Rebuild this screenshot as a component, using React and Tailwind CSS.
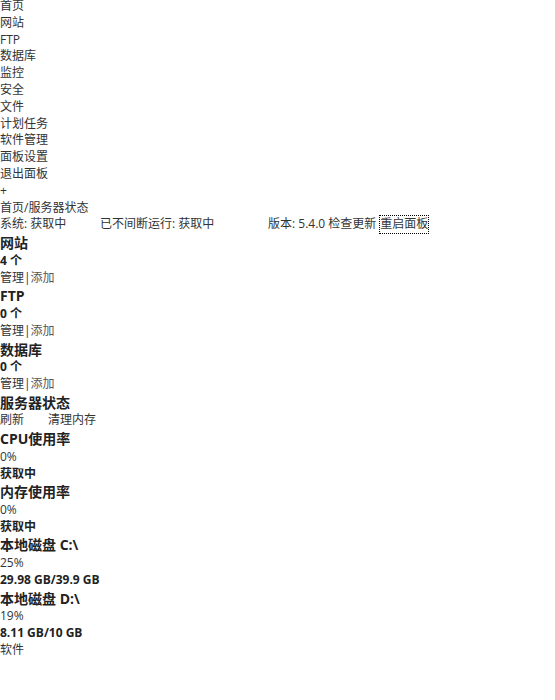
import React from 'react';

const menu = ['首页', '网站', 'FTP', '数据库', '监控', '安全', '文件', '计划任务', '软件管理', '面板设置', '退出面板'];

const counts = [
    { title: '网站', value: '4 个' },
    { title: 'FTP', value: '0 个' },
    { title: '数据库', value: '0 个' },
];

const Heading = ({ children }) => (
    <div className="text-[14px] leading-[19.6px] font-bold text-[#222]">{children}</div>
);

const App = () => {
    return (
        <div
            className="bg-white min-h-[700px] text-[12px] leading-[16.8px] text-[#333] -mt-[2px]"
            style={{ fontFamily: '"Open Sans", "Noto Sans CJK SC", sans-serif' }}
        >
            {/* Sidebar menu */}
            <ul>
                {menu.map((item) => (
                    <li key={item}>{item}</li>
                ))}
            </ul>
            <div>+</div>

            {/* Breadcrumb + status bar */}
            <div>首页/服务器状态</div>
            <div className="flex">
                <span className="w-[100px]">系统: 获取中</span>
                <span className="w-[168px]">已不间断运行: 获取中</span>
                <span>版本: 5.4.0 检查更新 </span>
                <span className="ml-[4px] outline-1 outline-dotted outline-black">重启面板</span>
            </div>

            {/* Counts */}
            {counts.map((c) => (
                <div key={c.title}>
                    <Heading>{c.title}</Heading>
                    <div className="font-bold text-[#222]">{c.value}</div>
                    <div>
                        <span>管理</span>|<span className="text-[#555]">添加</span>
                    </div>
                </div>
            ))}

            {/* Server status */}
            <Heading>服务器状态</Heading>
            <div className="flex">
                <span className="w-[48px]">刷新</span>
                <span>清理内存</span>
            </div>

            <Heading>CPU使用率</Heading>
            <div>0%</div>
            <div className="font-bold text-[#222]">获取中</div>

            <Heading>内存使用率</Heading>
            <div>0%</div>
            <div className="font-bold text-[#222]">获取中</div>

            <Heading>本地磁盘 C:\</Heading>
            <div>25%</div>
            <div className="font-bold text-[#222]">29.98 GB/39.9 GB</div>

            <Heading>本地磁盘 D:\</Heading>
            <div>19%</div>
            <div className="font-bold text-[#222]">8.11 GB/10 GB</div>

            <div>软件</div>
        </div>
    );
};

export default App;
